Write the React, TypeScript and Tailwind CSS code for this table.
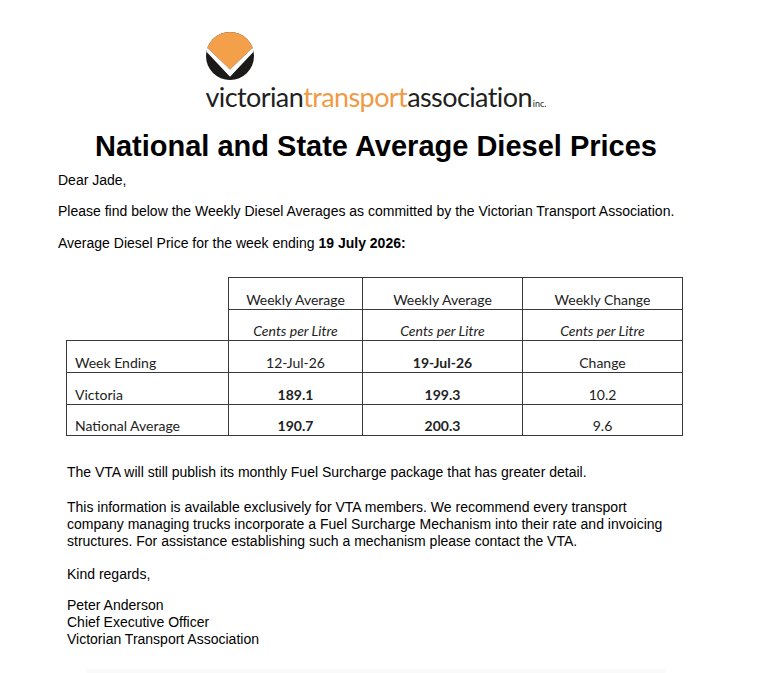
const ROWS = [
  { label: "Week Ending", prev: "12-Jul-26", curr: "19-Jul-26", change: "Change", boldPrev: false, h: "h-[32px]" },
  { label: "Victoria", prev: "189.1", curr: "199.3", change: "10.2", boldPrev: true, h: "h-[32px]" },
  { label: "National Average", prev: "190.7", curr: "200.3", change: "9.6", boldPrev: true, h: "h-[31px]" },
];

function VtaLogo() {
  return (
    <div className="flex flex-col items-start">
      <svg width="48" height="48" viewBox="0 0 100 100">
        <defs>
          <clipPath id="vta-clip">
            <circle cx="50" cy="50" r="50" />
          </clipPath>
        </defs>
        <circle cx="50" cy="50" r="50" fill="#1c1a19" />
        <g clipPath="url(#vta-clip)">
          <polygon points="0,0 100,0 100,30 50,78 0,30" fill="#f4a04a" />
          <polygon points="0,30 50,78 100,30 100,40 50,93 0,40" fill="#ffffff" />
        </g>
      </svg>
      <div className="mt-[3px] flex items-baseline text-[27px] leading-none tracking-[-0.6px] text-[#231f20] [font-family:Lato,'Open_Sans',sans-serif]">
        <span>victorian</span>
        <span className="text-[#ef9a45]">transport</span>
        <span>association</span>
        <span className="ml-[1px] text-[9px] tracking-normal">inc.</span>
      </div>
    </div>
  );
}

function PriceTable() {
  const cell = "border border-[#3a3a3a] align-bottom pb-0 leading-[18px]";
  return (
    <table className="ml-[8px] w-[617px] table-fixed border-collapse text-[14px] text-[#222] [font-family:Lato,sans-serif]">
      <colgroup>
        <col className="w-[162px]" />
        <col className="w-[134px]" />
        <col className="w-[160px]" />
        <col className="w-[160px]" />
      </colgroup>
      <tbody>
        <tr>
          <td className="h-[32px]" />
          <td className={`${cell} h-[32px] text-center`}>Weekly Average</td>
          <td className={`${cell} h-[32px] text-center`}>Weekly Average</td>
          <td className={`${cell} h-[32px] text-center`}>Weekly Change</td>
        </tr>
        <tr>
          <td className="h-[31px]" />
          <td className={`${cell} h-[31px] text-center italic`}>Cents per Litre</td>
          <td className={`${cell} h-[31px] text-center italic`}>Cents per Litre</td>
          <td className={`${cell} h-[31px] text-center italic`}>Cents per Litre</td>
        </tr>
        {ROWS.map((r) => (
          <tr key={r.label}>
            <td className={`${cell} ${r.h} pl-[8px] text-left`}>{r.label}</td>
            <td className={`${cell} ${r.h} text-center ${r.boldPrev ? "font-bold" : ""}`}>{r.prev}</td>
            <td className={`${cell} ${r.h} text-center font-bold`}>{r.curr}</td>
            <td className={`${cell} ${r.h} text-center`}>{r.change}</td>
          </tr>
        ))}
      </tbody>
    </table>
  );
}

export default function App() {
  return (
    <div className="min-h-[673px] w-[776px] bg-white text-black [font-family:'Liberation_Sans',Arial,sans-serif]">
      <div className="ml-[58px] w-[636px] pt-[32px]">
        <div className="flex justify-center">
          <VtaLogo />
        </div>

        <h1 className="mt-[22px] text-center text-[29px] font-bold leading-[29px]">
          National and State Average Diesel Prices
        </h1>

        <div className="mt-[11px] text-[14px] leading-[17px]">
          <p>Dear Jade,</p>
          <p className="mt-[14px]">
            Please find below the Weekly Diesel Averages as committed by the Victorian Transport Association.
          </p>
          <p className="mt-[15px]">
            Average Diesel Price for the week ending <b>19 July 2026:</b>
          </p>
        </div>

        <div className="mt-[25px]">
          <PriceTable />
        </div>

        <div className="mt-[28px] ml-[9px] w-[620px] text-[14px] leading-[17px]">
          <p>The VTA will still publish its monthly Fuel Surcharge package that has greater detail.</p>
          <p className="mt-[18px]">
            This information is available exclusively for VTA members. We recommend every transport company
            managing trucks incorporate a Fuel Surcharge Mechanism into their rate and invoicing structures. For
            assistance establishing such a mechanism please contact the VTA.
          </p>
          <p className="mt-[16px]">Kind regards,</p>
          <p className="mt-[14px]">
            Peter Anderson
            <br />
            Chief Executive Officer
            <br />
            Victorian Transport Association
          </p>
        </div>

        <div className="mt-[21px] ml-[29px] h-[5px] w-[578px] bg-[#f9f9f9]" />
      </div>
    </div>
  );
}
